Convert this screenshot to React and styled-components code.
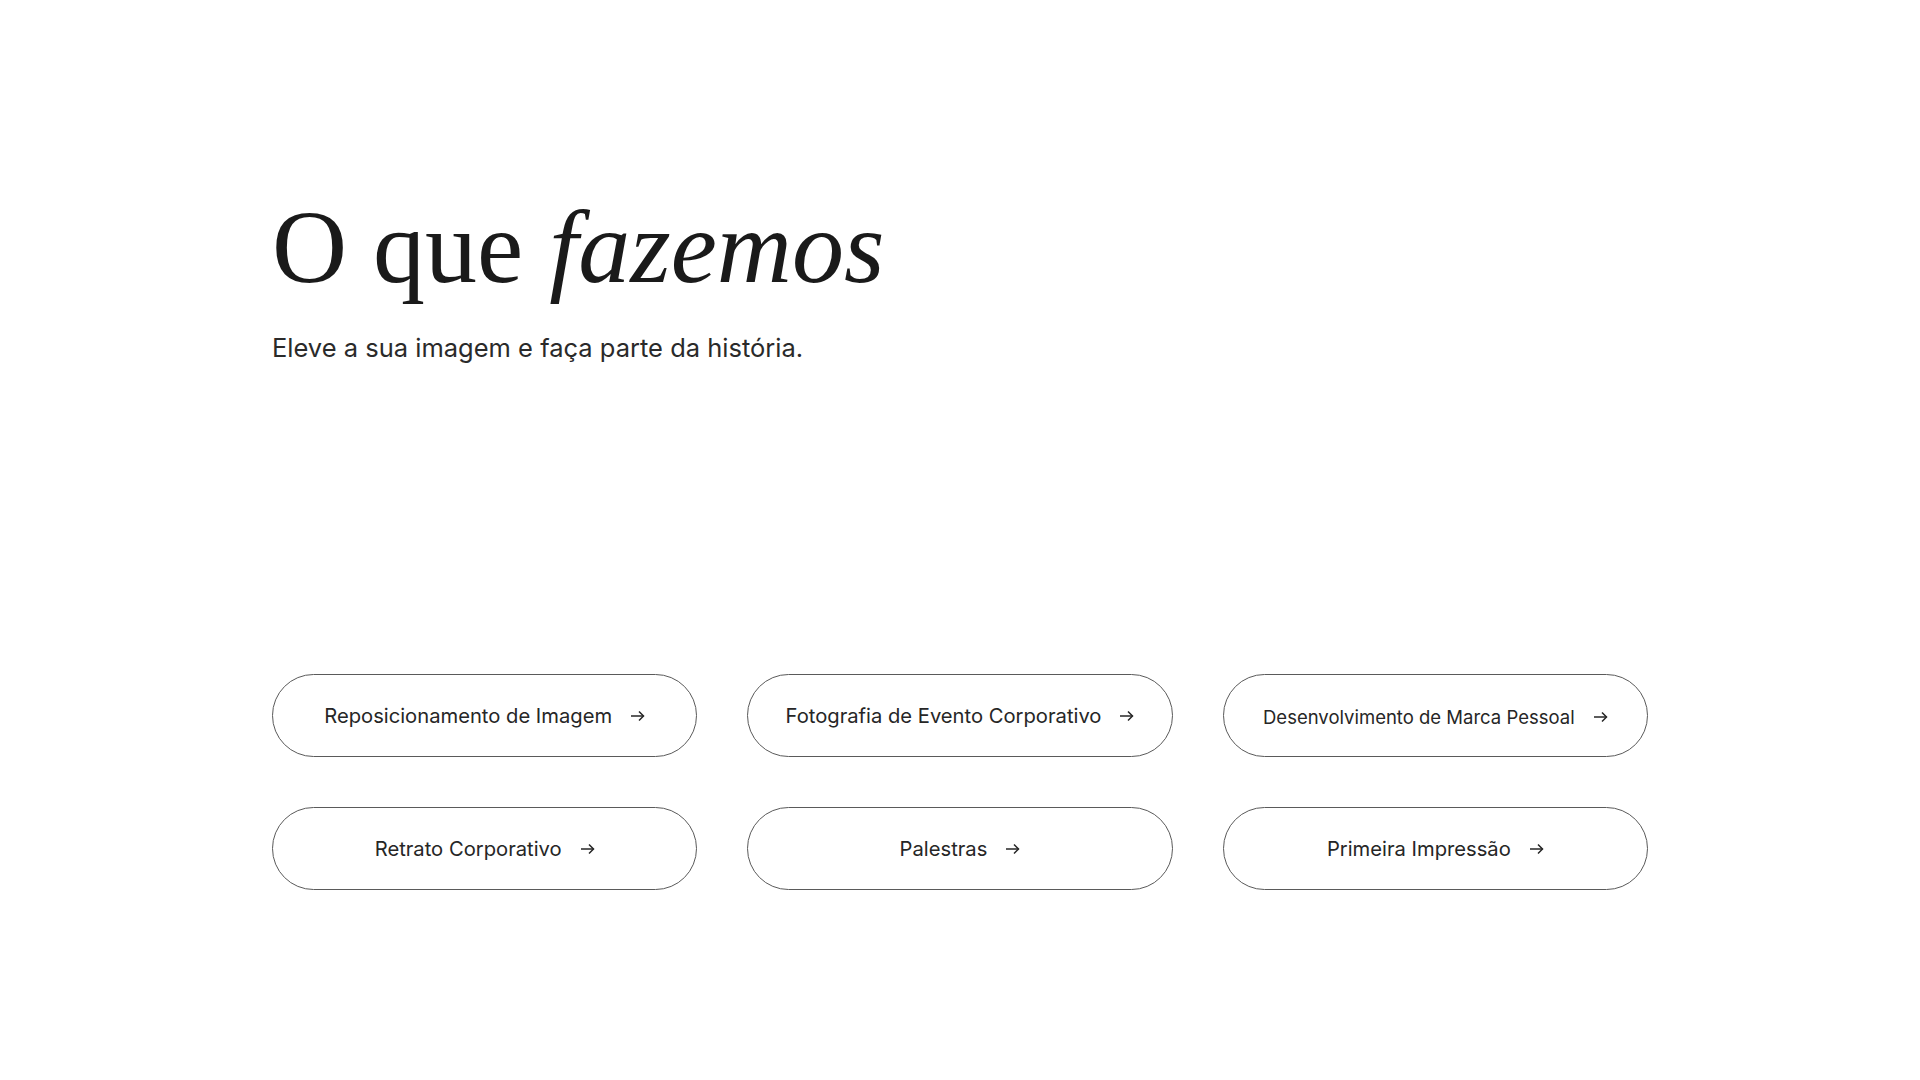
import React from 'react';
import styled, { createGlobalStyle } from 'styled-components';

const GlobalStyle = createGlobalStyle`
	* {
		box-sizing: border-box;
	}
	body {
		margin: 0;
		background: #ffffff;
		color: #1b1b1b;
		font-family: Inter, 'Noto Sans', sans-serif;
	}
`;

const Section = styled.section`
	width: 1376px;
	margin: 0 auto;
	padding-top: 185px;
	padding-bottom: 190px;
`;

const Heading = styled.h1`
	margin: 0;
	font-family: 'Liberation Serif', 'DejaVu Serif', serif;
	font-weight: 400;
	font-size: 104px;
	line-height: 1.2;
	letter-spacing: 0;
	color: #1a1a1a;
	em {
		font-style: italic;
	}
`;

const Subtitle = styled.p`
	margin: 20px 0 0;
	font-size: 25.5px;
	line-height: 1.4;
	letter-spacing: 0;
	color: #2a2a2a;
`;

const Services = styled.ul`
	list-style: none;
	margin: 309px 0 0;
	padding: 0;
	display: grid;
	grid-template-columns: repeat(3, 1fr);
	gap: 50px;
`;

const ServiceButton = styled.a`
	height: 83px;
	display: flex;
	align-items: center;
	justify-content: center;
	gap: 18px;
	border: 1px solid #5a5a5a;
	border-radius: 999px;
	color: #262626;
	text-decoration: none;
	font-size: ${(p) => (p.$small ? '18.5px' : '20.2px')};
	padding-top: ${(p) => (p.$small ? '2px' : '0')};
	cursor: pointer;
	transition: background 0.2s;
	&:hover {
		background: #f5f5f5;
	}
`;

const Arrow = () => (
	<svg width="15" height="12" viewBox="0 0 15 12" fill="none" stroke="#262626" strokeWidth="1.5">
		<path d="M1 6h12.5" />
		<path d="M9 1.5L13.5 6L9 10.5" />
	</svg>
);

const services = [
	{ label: 'Reposicionamento de Imagem' },
	{ label: 'Fotografia de Evento Corporativo' },
	{ label: 'Desenvolvimento de Marca Pessoal', small: true },
	{ label: 'Retrato Corporativo' },
	{ label: 'Palestras' },
	{ label: 'Primeira Impressão' },
];

const App = () => (
	<>
		<GlobalStyle />
		<Section>
			<Heading>
				O que <em>fazemos</em>
			</Heading>
			<Subtitle>Eleve a sua imagem e faça parte da história.</Subtitle>
			<Services>
				{services.map((s) => (
					<li key={s.label}>
						<ServiceButton href="#" $small={s.small}>
							<span>{s.label}</span>
							<Arrow />
						</ServiceButton>
					</li>
				))}
			</Services>
		</Section>
	</>
);

export default App;
